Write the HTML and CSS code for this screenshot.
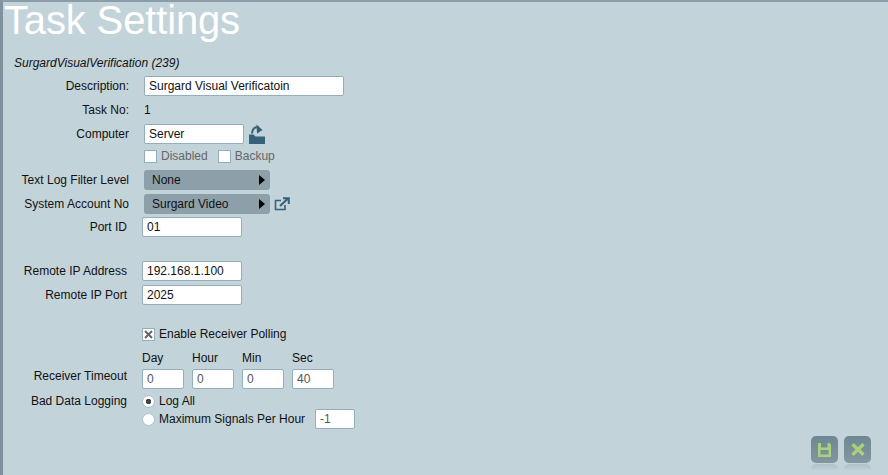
FILE: index.html
```html
<!DOCTYPE html>
<html lang="en">
<head>
  <meta charset="UTF-8">
  <meta name="viewport" content="width=device-width, initial-scale=1.0">
  <title>Task Settings</title>
  <link rel="stylesheet" href="styles.css">
</head>
<body>

<div class="page">
  <h1 class="title">Task Settings</h1>
  <div class="task-name">SurgardVisualVerification (239)</div>

  <div class="form-group">
    <div class="row">
      <div class="label">Description:</div>
      <input class="text wide" type="text" value="Surgard Visual Verificatoin">
    </div>
    <div class="row">
      <div class="label">Task No:</div>
      <div class="value">1</div>
    </div>
    <div class="row">
      <div class="label">Computer</div>
      <input class="text mid" type="text" value="Server">
      <svg class="icon-open" width="18" height="21" viewBox="0 0 18 21">
        <path d="M1 10.500h4.500l2 2H17V20H1z" fill="#376079"/>
        <path d="M4 9.500C4.300 4.500 7 2.500 10.500 3.500" fill="none" stroke="#376079" stroke-width="2"/>
        <path d="M8.500 0.500L14.500 6 9 9.500z" fill="#376079"/>
      </svg>
    </div>
    <div class="row checks">
      <div class="label"></div>
      <label class="check muted"><span class="box"></span>Disabled</label>
      <label class="check muted"><span class="box"></span>Backup</label>
    </div>
    <div class="row">
      <div class="label">Text Log Filter Level</div>
      <div class="select"><span>None</span><i class="arrow"></i></div>
    </div>
    <div class="row">
      <div class="label">System Account No</div>
      <div class="select"><span>Surgard Video</span><i class="arrow"></i></div>
      <svg class="icon-link" width="16" height="14" viewBox="0 0 16 14">
        <path d="M7 3.500H1.500v9H11V8" fill="none" stroke="#376079" stroke-width="1.600"/>
        <path d="M6 9L13.500 2M9 1.200h5.800V7" fill="none" stroke="#376079" stroke-width="2"/>
      </svg>
    </div>
  </div>

  <div class="form-group lower">
    <div class="row">
      <div class="label">Port ID</div>
      <input class="text short" type="text" value="01">
    </div>
    <div class="row spaced">
      <div class="label">Remote IP Address</div>
      <input class="text short" type="text" value="192.168.1.100">
    </div>
    <div class="row">
      <div class="label">Remote IP Port</div>
      <input class="text short" type="text" value="2025">
    </div>
    <div class="row polling">
      <div class="label"></div>
      <label class="check"><span class="box on">
        <svg width="9" height="9" viewBox="0 0 9 9"><path d="M1 1l7 7M8 1L1 8" stroke="#666" stroke-width="2"/></svg>
      </span>Enable Receiver Polling</label>
    </div>
    <div class="row time-head">
      <div class="label"></div>
      <div class="time-col">Day</div>
      <div class="time-col">Hour</div>
      <div class="time-col">Min</div>
      <div class="time-col">Sec</div>
    </div>
    <div class="row time-row">
      <div class="label">Receiver Timeout</div>
      <input class="text time dim" type="text" value="0">
      <input class="text time dim" type="text" value="0">
      <input class="text time dim" type="text" value="0">
      <input class="text time dim" type="text" value="40">
    </div>
    <div class="row log-row">
      <div class="label">Bad Data Logging</div>
      <label class="check"><span class="radio on"></span>Log All</label>
    </div>
    <div class="row max-row">
      <div class="label"></div>
      <label class="check"><span class="radio"></span>Maximum Signals Per Hour</label>
      <input class="text time dim" type="text" value="-1">
    </div>
  </div>

  <div class="actions">
    <div class="action">
      <svg width="15" height="16" viewBox="0 0 15 16">
        <path fill-rule="evenodd" d="M1 1h3v4.500h6.500V1h2L14 2.500V15H1z M3.500 8v4.500h8V8z" fill="#a9d07c"/>
      </svg>
    </div>
    <div class="action">
      <svg width="14" height="13" viewBox="0 0 14 13">
        <path d="M1.500 1.200l11 10.600M12.500 1.200l-11 10.600" stroke="#a9d07c" stroke-width="3.400"/>
      </svg>
    </div>
  </div>
</div>

</body>
</html>
```

FILE: styles.css
```css
* {
  box-sizing: border-box;
}
html, body {
  margin: 0;
  height: 100%;
}
body {
  font-family: "Liberation Sans", Arial, sans-serif;
  font-size: 12px;
  color: #111;
  background-color: #c3d3da;
}
.page {
  height: 475px;
  overflow: hidden;
  display: flex;
  flex-direction: column;
  border-top: 2px solid #8a9da9;
  border-left: 3px solid #7f929e;
}
.title {
  margin: -2px 0 0;
  padding-left: 1px;
  font-size: 40px;
  font-weight: normal;
  letter-spacing: -0.15px;
  line-height: 40px;
  color: #fff;
}
.task-name {
  margin: 16px 0 0 11px;
  line-height: 14px;
  font-style: italic;
}
.form-group {
  margin-top: 4px;
}
.form-group.lower {
  margin-top: -1px;
}
.row {
  display: flex;
  align-items: center;
  height: 24px;
}
.label {
  width: 126px;
  flex: none;
  text-align: right;
}
.value {
  margin-left: 15px;
}
.text {
  height: 20px;
  margin: 0;
  padding: 0 4px;
  border: 1px solid #93aebd;
  border-radius: 2px;
  background: #fff;
  font-family: inherit;
  font-size: 12px;
  color: #111;
}
.form-group > .row > .text.wide,
.form-group > .row > .text.mid,
.select,
.checks .check:first-of-type {
  margin-left: 15px;
}
.wide {
  width: 200px;
}
.mid {
  width: 100px;
}
.icon-open {
  margin: 1px 0 0 4px;
}
.check {
  display: flex;
  align-items: center;
}
.muted {
  color: #666;
}
.checks {
  height: 22px;
  padding-bottom: 2px;
}
.checks .check + .check {
  margin-left: 10px;
}
.box {
  display: flex;
  align-items: center;
  justify-content: center;
  width: 13px;
  height: 13px;
  margin-right: 4px;
  border: 1px solid #93aebd;
  background: #fff;
}
.select {
  display: flex;
  align-items: center;
  justify-content: space-between;
  width: 126px;
  height: 20px;
  padding: 0 5px 0 8px;
  border-radius: 3px;
  background: #8da0aa;
}
.arrow {
  border-left: 6px solid #000;
  border-top: 5px solid transparent;
  border-bottom: 5px solid transparent;
}
.icon-link {
  margin-left: 4px;
}
.lower .label {
  width: 124px;
}
.lower .row > .text,
.lower .check {
  margin-left: 15px;
}
.short {
  width: 100px;
}
.spaced {
  margin-top: 20px;
}
.polling {
  margin-top: 15px;
}
.time-head {
  height: 23px;
}
.time-head .label {
  margin-right: 15px;
}
.time-col {
  width: 50px;
}
.time-row {
  height: 20px;
}
.lower .time-row .text {
  width: 42px;
  margin: 0 8px 0 0;
}
.time-row .label {
  margin-right: 15px;
  padding-bottom: 6px;
}
.dim {
  color: #555;
}
.log-row {
  height: 18px;
  margin-top: 3px;
}
.max-row {
  height: 18px;
}
.lower .max-row .text {
  width: 40px;
  margin-left: 10px;
}
.radio {
  width: 13px;
  height: 13px;
  margin-right: 4px;
  border: 1px solid #aebfc8;
  border-radius: 50%;
  background: #fff;
}
.radio.on {
  background: radial-gradient(circle, #444 0 2.500px, #fff 3px);
}
.actions {
  display: flex;
  justify-content: flex-end;
  gap: 6px;
  margin-top: auto;
  padding: 0 17px 12px 0;
}
.action {
  display: flex;
  align-items: center;
  justify-content: center;
  width: 27px;
  height: 27px;
  border-radius: 5px;
  background: linear-gradient(#6f8794, #82969f);
  -webkit-box-reflect: below 1px linear-gradient(transparent 75%, rgba(255,255,255,0.3));
}
```
